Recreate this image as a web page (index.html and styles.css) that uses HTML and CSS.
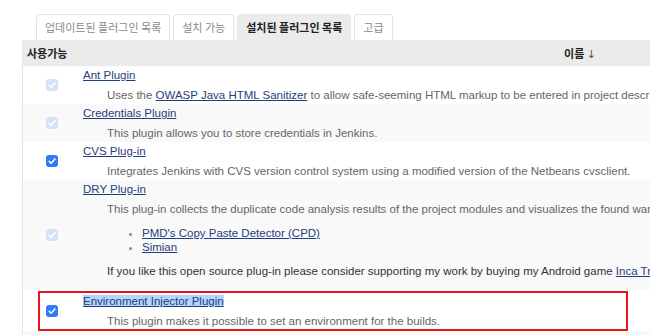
FILE: index.html
```html
<!DOCTYPE html>
<html>
<head>
  <title>플러그인 관리</title>
  <link rel="stylesheet" href="styles.css">
</head>
<body>
  <div class="page">
    <div class="tabs">
      <div class="tab">업데이트된 플러그인 목록</div>
      <div class="tab">설치 가능</div>
      <div class="tab active">설치된 플러그인 목록</div>
      <div class="tab">고급</div>
    </div>

    <table class="plugins">
      <tr>
        <th class="enable">사용가능</th>
        <th class="name">이름 <span class="arrow">↓</span></th>
      </tr>
      <tr>
        <td class="check"><span class="cb off"><svg viewBox="0 0 12 12"><path d="M3.2 6.3 L5.1 8.2 L8.9 3.9"/></svg></span></td>
        <td class="info">
          <a href="#">Ant Plugin</a>
          <div class="desc">Uses the <a href="#">OWASP Java HTML Sanitizer</a> to allow safe-seeming HTML markup to be entered in project descriptions.</div>
        </td>
      </tr>
      <tr class="alt">
        <td class="check"><span class="cb off"><svg viewBox="0 0 12 12"><path d="M3.2 6.3 L5.1 8.2 L8.9 3.9"/></svg></span></td>
        <td class="info">
          <a href="#">Credentials Plugin</a>
          <div class="desc">This plugin allows you to store credentials in Jenkins.</div>
        </td>
      </tr>
      <tr>
        <td class="check"><span class="cb"><svg viewBox="0 0 12 12"><path d="M3.2 6.3 L5.1 8.2 L8.9 3.9"/></svg></span></td>
        <td class="info">
          <a href="#">CVS Plug-in</a>
          <div class="desc">Integrates Jenkins with CVS version control system using a modified version of the Netbeans cvsclient.</div>
        </td>
      </tr>
      <tr class="alt">
        <td class="check"><span class="cb off"><svg viewBox="0 0 12 12"><path d="M3.2 6.3 L5.1 8.2 L8.9 3.9"/></svg></span></td>
        <td class="info">
          <a href="#">DRY Plug-in</a>
          <div class="desc">This plug-in collects the duplicate code analysis results of the project modules and visualizes the found warnings.</div>
          <ul>
            <li><a href="#">PMD's Copy Paste Detector (CPD)</a></li>
            <li><a href="#">Simian</a></li>
          </ul>
          <p class="note">If you like this open source plug-in please consider supporting my work by buying my Android game <a href="#">Inca Trails</a>. Thanks!</p>
        </td>
      </tr>
      <tr class="env">
        <td class="check"><span class="cb"><svg viewBox="0 0 12 12"><path d="M3.2 6.3 L5.1 8.2 L8.9 3.9"/></svg></span></td>
        <td class="info">
          <a href="#" class="selected">Environment Injector Plugin</a>
          <div class="desc">This plugin makes it possible to set an environment for the builds.</div>
        </td>
      </tr>
      <tr class="alt">
        <td class="check"></td>
        <td class="info empty"></td>
      </tr>
    </table>

    <!-- annotation box drawn over the row -->
    <div class="mark"></div>
  </div>
</body>
</html>
```

FILE: styles.css
```css
body {
  margin: 0;
  font-family: "Liberation Sans", Arial, "Noto Sans CJK KR", sans-serif;
  font-size: 11.5px;
  background: #fff;
  overflow: hidden;
}

.page {
  position: relative;
  padding: 14px 0 0 22px;
}

.tabs {
  display: flex;
  gap: 3px;
  margin-left: 14px;
  height: 26px;
}

.tab {
  border: 1px solid #e3e3e3;
  border-bottom: none;
  border-radius: 4px 4px 0 0;
  padding: 0 8px;
  line-height: 25px;
  font-family: "Noto Sans CJK KR", sans-serif;
  font-size: 11px;
  color: #8a8a8a;
  background: #fff;
}

.tab.active {
  background: #ebebeb;
  border-color: #ebebeb;
  color: #222;
  font-weight: bold;
}

.plugins {
  border-collapse: collapse;
  width: 1064px;
  border-left: 1px solid #e6e6e6;
}

.plugins th {
  background: #ebebeb;
  height: 26px;
  padding: 0;
  font-family: "Noto Sans CJK KR", sans-serif;
  font-size: 11px;
  color: #222;
}

.plugins th.enable {
  width: 48px;
  padding-left: 4px;
  text-align: left;
}

.plugins th.name {
  text-align: center;
}

.arrow {
  font-weight: normal;
  font-family: "DejaVu Sans", sans-serif;
  color: #555;
}

.plugins tr.alt td {
  background: #f9f9f9;
}

td.check {
  padding: 0 0 0 23px;
  vertical-align: middle;
}

td.info {
  padding: 1px 0 1px 8px;
  vertical-align: top;
  line-height: 16px;
}

tr.env td.info {
  padding: 3px 0 2px 8px;
}

td.empty {
  height: 20px;
}

a {
  color: #1f3e7c;
}

a.selected {
  background: #b5d5fc;
}

.desc {
  margin-top: 4px;
  padding-left: 24px;
  color: #666;
  white-space: nowrap;
}

.plugins ul {
  margin: 10px 0 0;
  padding-left: 59px;
  line-height: 13.5px;
}

.plugins li::marker {
  color: #888;
}

.note {
  margin: 9px 0 10px 24px;
  color: #333;
  white-space: nowrap;
}

/* checkbox look */
.cb {
  display: block;
  width: 12px;
  height: 12px;
  border-radius: 3px;
  background: #2f7cf6;
}

.cb.off {
  background: #d3e3fb;
}

.cb svg {
  display: block;
  width: 12px;
  height: 12px;
}

.cb path {
  fill: none;
  stroke: #fff;
  stroke-width: 1.5;
  stroke-linecap: round;
  stroke-linejoin: round;
}

.mark {
  position: absolute;
  left: 38px;
  top: 291px;
  width: 586px;
  height: 36px;
  border: 2px solid #e8131b;
}
```
